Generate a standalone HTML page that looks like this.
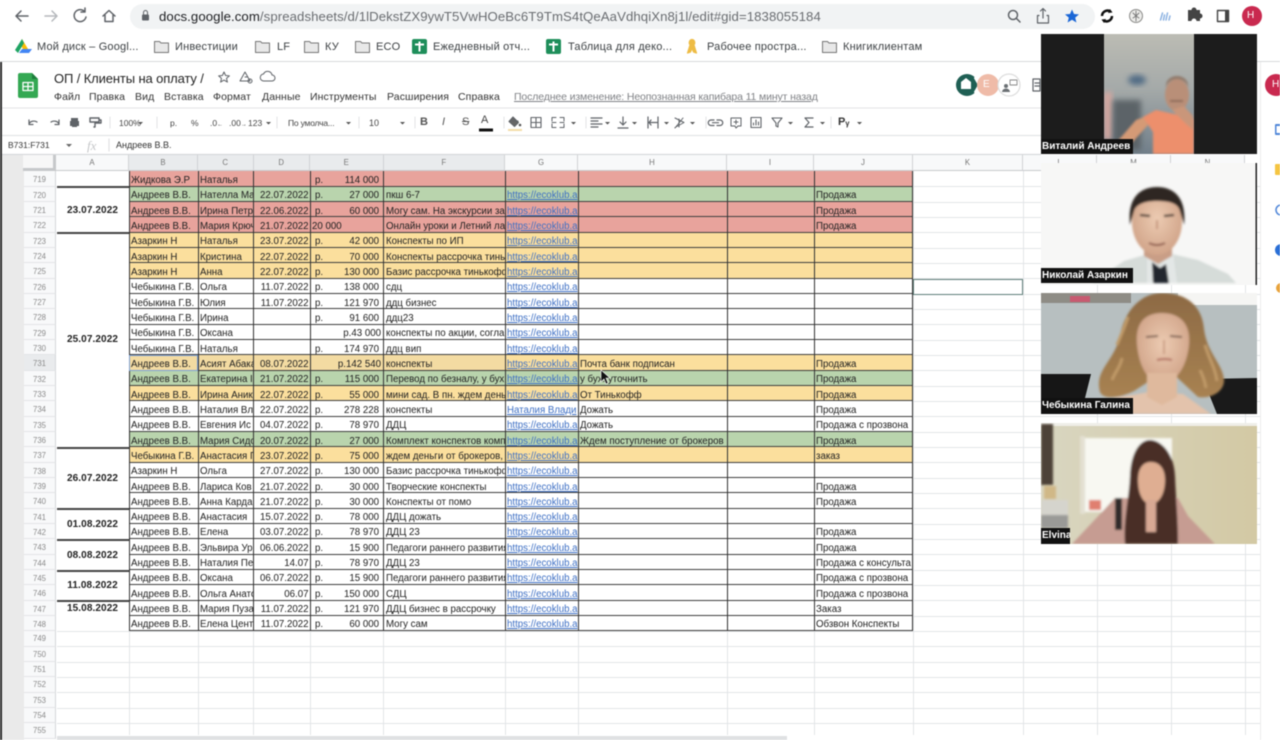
<!DOCTYPE html>
<html lang="ru"><head><meta charset="utf-8"><title>ОП / Клиенты на оплату</title>
<style>
*{box-sizing:border-box}
html,body{margin:0;padding:0;width:1280px;height:740px;overflow:hidden;background:#fff}
#p{position:relative;width:1280px;height:740px;overflow:hidden;font-family:"Liberation Sans",sans-serif;color:#222;filter:blur(.4px)}
.a{position:absolute;white-space:nowrap}
.b{position:absolute;font-size:11px;color:#3c4043;top:41px;letter-spacing:.18px;white-space:nowrap}
.m{position:absolute;font-size:10.5px;color:#333;top:91px;letter-spacing:.1px;white-space:nowrap}
.t{position:absolute;font-size:8.5px;color:#444;top:118px;white-space:nowrap}
svg{position:absolute;overflow:hidden}
.r{position:absolute;left:129px;width:784px;height:15.33px;border-bottom:1px solid #3f3f3f;font-size:9.7px;color:#222}
.r i{position:absolute;top:2.5px;line-height:13px;font-style:normal;white-space:nowrap;overflow:hidden;height:12.8px}
.r i:nth-child(1){left:2px;width:67px}
.r i:nth-child(2){left:71px;width:54px}
.r i:nth-child(3){left:125px;width:54.5px;text-align:right}
.r i:nth-child(4){left:186px;width:20px}
.r i:nth-child(5){left:185px;width:65px;text-align:right}
.r i:nth-child(6){left:257px;width:119px}
.r i:nth-child(7){left:378px;width:71px;color:#3d6fc4;text-decoration:underline}
.r i:nth-child(8){left:451px;width:148px}
.r i:nth-child(9){left:687px;width:97px}
.y{background:#fbdf9d}.g{background:#b9d4ad}.d{background:#e8a39c}
.h{position:absolute;left:57px;width:1203px;height:1px;background:#e3e5e7}
.v{position:absolute;top:171px;height:564px;width:1px;background:#e3e5e7}
.k{position:absolute;top:171.4px;height:460px;width:1px;background:#333}
.n{position:absolute;left:24px;width:32px;height:15.33px;background:#f8f9fa;border-bottom:1px solid #e3e5e7;border-right:1px solid #d5d7da;font-size:7.8px;color:#8a8a8a;text-align:center;line-height:18px}
.e{line-height:15.5px}
.c{position:absolute;top:155px;height:16px;background:#f8f9fa;border-right:1px solid #d0d2d5;border-bottom:1px solid #c8cacd;font-size:7.8px;color:#777;text-align:center;line-height:15px}
.s{background:#e9ebed}
.dt{position:absolute;left:57px;width:71px;text-align:center;font-size:10px;font-weight:700;color:#222;letter-spacing:.1px}
.sp{position:absolute;left:57px;width:72px;height:2px;background:#444}
.l{position:absolute;left:1041px;background:#111;color:#fff;font-size:10px;font-weight:700;letter-spacing:0;height:15px;line-height:15px;padding-left:1px;white-space:nowrap;overflow:hidden}
</style></head><body><div id="p">

<!-- Browser chrome -->
<svg style="left:0;top:0" width="1280" height="62" viewBox="0 0 1280 62" fill="none" stroke="#5f6368" stroke-width="1.5" stroke-linecap="round" stroke-linejoin="round">
<rect x="130" y="4" width="965" height="25" rx="12.5" fill="#f1f3f4" stroke="none"/>
<path d="M28 16H16M21 11l-5 5 5 5"/>
<path d="M45 16h12M52 11l5 5-5 5" stroke="#b5b8bc"/>
<path d="M85 12a6 6 0 1 0 1 5M85 8v4h-4"/>
<path d="M103 16l6-5.5 6 5.5M105 15v6.5h8V15"/>
<rect x="142" y="14.5" width="7" height="6" rx="1" fill="#5f6368" stroke="none"/>
<path d="M143.500 14.500v-2a2 2 0 0 1 4 0v2" stroke-width="1"/>
<circle cx="1013" cy="15" r="4.500"/><path d="M1016.500 18.500l3.500 3.500"/>
<path d="M1039 15.500h-1.500v7.500h11v-7.500h-1.500M1043 18V9M1040.500 11l2.500-2.500 2.500 2.500" stroke-width="1.200"/>
<path d="M1072 9.500l2 4.500 5 .4-3.800 3.200 1.200 4.900-4.400-2.700-4.400 2.700 1.200-4.900-3.800-3.200 5-.4z" fill="#1a66d6" stroke="none"/>
<path d="M1102 16a5.500 5.500 0 0 1 8.500-4.500M1112 16a5.500 5.500 0 0 1-8.500 4.500" stroke="#111" stroke-width="2.500" stroke-linecap="butt"/>
<path d="M1110 9l2.500 3.500-4.500.5zM1104 23l-2.500-3.500 4.500-.5z" fill="#111" stroke="none"/>
<circle cx="1136" cy="16" r="6.500" fill="#ececea" stroke="#8a8a88" stroke-width="1"/><path d="M1136 11v10M1133 13l3 3 3-3M1133 18l3-2 3 2" stroke="#777" stroke-width=".9"/>
<path d="M1160.500 20l2-7M1163.500 20l1-5M1166 20l1.500-7M1169 20l1-4" stroke="#8db3e2" stroke-width="1.500"/>
<path d="M1188 12h3.500a2.500 2.500 0 0 1 5 0h3.500v3.500a2.500 2.500 0 0 1 0 5V23h-3.500a2.500 2.500 0 0 0-5 0H1188z" fill="#444" stroke="none" transform="translate(0 -2)"/>
<rect x="1217.500" y="10.500" width="11" height="11" stroke="#444" stroke-width="1.400"/><rect x="1225" y="10" width="4" height="12" fill="#444" stroke="none"/>
<circle cx="1252" cy="16" r="10" fill="#c9294f" stroke="none"/>
<!-- Bookmarks -->
<path d="M22 39l6 10h-5l-3-5z" fill="#fbbc04" stroke="none"/><path d="M22 39l-7 11 3 3 6-10z" fill="#1fa463" stroke="none"/><path d="M19 53h10l3-4H22z" fill="#4285f4" stroke="none"/>
<g stroke="#777" stroke-width="1"><path d="M154.500 41.500h5l1.500 1.500h7.500v9.500h-14z" fill="#e8e8e8"/><path d="M255.500 41.500h5l1.500 1.500h7.500v9.500h-14z" fill="#e8e8e8"/><path d="M304.500 41.500h5l1.500 1.500h7.500v9.500h-14z" fill="#e8e8e8"/><path d="M355.500 41.500h5l1.500 1.500h7.500v9.500h-14z" fill="#e8e8e8"/><path d="M822.500 41.500h5l1.500 1.500h7.500v9.500h-14z" fill="#e8e8e8"/></g>
<rect x="412" y="39" width="15" height="15" rx="2" fill="#1e8e5a" stroke="none"/><path d="M415 44.500h9M419.500 41.500v10" stroke="#fff" stroke-width="2" stroke-linecap="butt"/>
<rect x="546" y="39" width="15" height="15" rx="2" fill="#1e8e5a" stroke="none"/><path d="M549 44.500h9M553.500 41.500v10" stroke="#fff" stroke-width="2" stroke-linecap="butt"/>
<path d="M692 39.500a2.800 3.200 0 0 1 0 6.400a2.800 3.200 0 0 1 0-6.400zM690 45l-2.500 8 3-1 2-5M694 45l2.500 8-3-1-2-5" fill="#eebc45" stroke="#eebc45" stroke-width="1.200"/>
</svg>
<div class="a" style="left:159px;top:8.500px;font-size:13.200px;color:#6a6d71;letter-spacing:.08px"><span style="color:#202124">docs.google.com</span>/spreadsheets/d/1lDekstZX9ywT5VwHOeBc6T9TmS4tQeAaVdhqiXn8j1l/edit#gid=1838055184</div>
<div class="a" style="left:1247px;top:10px;font-size:10px;color:#fff">Н</div>
<div class="b" style="left:37px">Мой диск – Googl...</div><div class="b" style="left:175px">Инвестиции</div><div class="b" style="left:277px">LF</div><div class="b" style="left:325px">КУ</div><div class="b" style="left:376px">ECO</div><div class="b" style="left:433px">Ежедневный отч...</div><div class="b" style="left:568px">Таблица для деко...</div><div class="b" style="left:707px">Рабочее простра...</div><div class="b" style="left:843px">Книгиклиентам</div>
<div class="a" style="left:0;top:61px;width:1280px;height:1px;background:#d8dadc"></div>

<!-- Docs header -->
<svg style="left:0;top:62px" width="1041" height="94" viewBox="0 62 1041 94" fill="none" stroke="#5f6368" stroke-width="1.200" stroke-linecap="round" stroke-linejoin="round">
<path d="M20 73h12l6 6v17a2 2 0 0 1-2 2H20a2 2 0 0 1-2-2V75a2 2 0 0 1 2-2z" fill="#34a853" stroke="none"/><path d="M32 73l6 6h-6z" fill="#1e7e3c" stroke="none"/><path d="M23 82.500h10v8H23zM23 86.500h10M28 82.500v8" stroke="#fff" stroke-width="1.300"/>
<path d="M224 72l1.600 3.500 3.800.4-2.900 2.500.9 3.700-3.400-2-3.400 2 .9-3.700-2.900-2.500 3.800-.4z" stroke-width="1"/>
<path d="M245 72l5 9h-10zM245 77h2" stroke-width="1"/><circle cx="250" cy="81" r="2" stroke-width="1"/>
<path d="M264 81h8a3 3 0 0 0 0-6 4.500 4.500 0 0 0-8.500-1 3.500 3.500 0 0 0 .5 7z" stroke-width="1"/>
<circle cx="967" cy="85" r="11" fill="#1f5f54" stroke="none"/><path d="M961 82l5-4 5 4v7h-10z" fill="#fff" stroke="none"/><path d="M975 78l4 7-4 7" stroke="#fff" stroke-width="2"/>
<circle cx="988" cy="85" r="11" fill="#efbba8" stroke="none"/>
<circle cx="1009" cy="85" r="11" fill="#fff" stroke="#ddd"/><circle cx="1006" cy="86" r="2" fill="#6b7074" stroke="none"/><path d="M1002 92a4 3.500 0 0 1 8 0z" fill="#6b7074" stroke="none"/><path d="M1010 80h7v5h-7z" stroke="#888" stroke-width=".9"/>
<path d="M1033 79h7v12h-7zM1035 83h5M1035 86h5" stroke="#5f6368"/>
<line x1="0" y1="108" x2="1041" y2="108" stroke="#e5e6e8"/>
<line x1="0" y1="135.500" x2="1041" y2="135.500" stroke="#e3e5e7"/>
<line x1="0" y1="154.500" x2="1041" y2="154.500" stroke="#d5d7da"/>
<!-- toolbar -->
<path d="M29 124a5 4 0 0 1 8-2M29 120v4.500h4"/><path d="M59 124a5 4 0 0 0-8-2M59 120v4.500h-4"/>
<path d="M71 118h7v3h-7zM70 121h9v5h-9zM72 124h5v3h-5z" fill="#5f6368" stroke="none"/><path d="M90 118h9v4h-9zM100 120h1v3h-6v4h-1" stroke-width="1.400"/>
<path d="M110 117v11M157 117v11M277 117v11M359 117v11M415 117v11M504 117v11M586 117v11M706 117v11M831 117v11" stroke="#e2e3e5" stroke-width="1"/>
<path d="M138 122h5l-2.500 2.500zM266 122h5l-2.500 2.500zM346 122h5l-2.500 2.500zM400 122h5l-2.500 2.500zM605 122h5l-2.500 2.500zM632 122h5l-2.500 2.500zM664 122h5l-2.500 2.500zM690 122h5l-2.500 2.500zM788 122h5l-2.500 2.500zM820 122h5l-2.500 2.500zM857 122h5l-2.500 2.500zM571 122h5l-2.500 2.500z" fill="#555" stroke="none"/>
<path d="M479 130h14" stroke="#111" stroke-width="3" stroke-linecap="butt"/>
<path d="M513 117l5.500 5.500-4 4-5.500-5zM509.500 121h8.500" stroke-width="1.100" fill="#666"/><circle cx="520" cy="125" r="1.300" fill="#555" stroke="none"/><path d="M508 130h14" stroke="#f3dca8" stroke-width="2" stroke-linecap="butt"/>
<path d="M531 117.500h10v10h-10zM531 122.500h10M536 117.500v10" stroke-width="1.100"/>
<path d="M552 121v-3.500h4M560 117.500h4v3.500M552 124v3.500h4M560 127.500h4V124M552 122.500h4M560 122.500h4" stroke-width="1"/>
<path d="M591 118h11M591 121h7M591 124h11M591 127h7"/><path d="M618 128h10M623 117v8M620 122l3 3 3-3"/><path d="M648 117v11M658 117v11M649 122.500h8M651 120l-2 2.500 2 2.500"/><path d="M675 118l9 4.500-9 5M679 119v8M683 118l-8 10" stroke-width="1"/>
<path d="M714 120h-3a2.500 2.500 0 0 0 0 5.500h3M717 120h3a2.500 2.500 0 0 1 0 5.500h-3M712.500 122.700h6"/>
<path d="M731 118h10v8h-3l-2 2-1-2h-4zM736 120v4M734 122h4" stroke-width="1"/><path d="M751 117.500h10v10h-10zM753.500 125v-2M756 125v-5M758.500 125v-3" stroke-width="1.100"/>
<path d="M772 118h10l-4 5v4l-2-1v-3z" stroke-width="1.100"/>
<path d="M813 118h-8l4 4.500-4 4.500h8"/>
<path d="M66 144l3 3 3-3h-6z" fill="#666" stroke="none"/><path d="M109 139v12" stroke="#e0e1e3"/>
</svg>
<div class="a" style="left:54px;top:70.500px;font-size:13px;color:#222;letter-spacing:-.12px">ОП / Клиенты на оплату /</div>
<div class="m" style="left:54px">Файл</div><div class="m" style="left:89px">Правка</div><div class="m" style="left:135px">Вид</div><div class="m" style="left:164px">Вставка</div><div class="m" style="left:213px">Формат</div><div class="m" style="left:262px">Данные</div><div class="m" style="left:310px">Инструменты</div><div class="m" style="left:387px">Расширения</div><div class="m" style="left:458px">Справка</div>
<div class="m" style="left:514px;color:#7f8185;text-decoration:underline;letter-spacing:-.13px">Последнее изменение: Неопознанная капибара 11 минут назад</div>
<div class="a" style="left:983px;top:79px;font-size:10px;color:#fff">E</div>
<div class="t" style="left:119px">100%</div><div class="t" style="left:170px">р.</div><div class="t" style="left:191px">%</div><div class="t" style="left:210px">.0<span style="font-size:6px">←</span></div><div class="t" style="left:229px">.00<span style="font-size:6px">→</span></div><div class="t" style="left:248px">123</div><div class="t" style="left:288px;letter-spacing:-.2px">По умолча...</div><div class="t" style="left:369px;font-size:9px">10</div>
<div class="a" style="left:420px;top:116px;font:700 11px 'Liberation Sans';color:#555">B</div><div class="a" style="left:442px;top:116px;font:italic 11px 'Liberation Sans';color:#555">I</div><div class="a" style="left:462px;top:116px;font-size:11px;color:#555;text-decoration:line-through">S</div><div class="a" style="left:481px;top:114px;font-size:11px;color:#444">A</div>
<div class="a" style="left:838px;top:116px;font:700 11px 'Liberation Sans';color:#333">Pᵧ</div>
<div class="a" style="left:8px;top:140px;font-size:8.500px;color:#333">B731:F731</div>
<div class="a" style="left:87px;top:138px;font:italic 13px 'Liberation Serif';color:#c4c6c8">fx</div>
<div class="a" style="left:116px;top:140px;font-size:9px;color:#333">Андреев В.В.</div>

<!-- Grid base -->
<div class="a" style="left:0;top:155px;width:24px;height:585px;background:#eaeaea"></div>
<div class="a" style="left:0;top:62px;width:2px;height:678px;background:#2a2a2a"></div>
<div class="a" style="left:23px;top:155px;width:33px;height:16px;background:#f7f7f7;border-right:3px solid #c6c8ca;border-bottom:3px solid #c6c8ca"></div>
<div class="c" style="left:56px;width:73px">A</div><div class="c s" style="left:129px;width:69px">B</div><div class="c s" style="left:198px;width:55.500px">C</div><div class="c s" style="left:253.500px;width:56.500px">D</div><div class="c s" style="left:310px;width:73.500px">E</div><div class="c s" style="left:383.500px;width:121.500px">F</div><div class="c" style="left:505px;width:73px">G</div><div class="c" style="left:578px;width:149px">H</div><div class="c" style="left:727px;width:87px">I</div><div class="c" style="left:814px;width:99px">J</div><div class="c" style="left:913px;width:110px">K</div><div class="c" style="left:1023px;width:74px">L</div><div class="c" style="left:1097px;width:74px">M</div><div class="c" style="left:1171px;width:74px">N</div>

<div class="v" style="left:129px"></div><div class="v" style="left:198px"></div><div class="v" style="left:253px"></div><div class="v" style="left:310px"></div><div class="v" style="left:383px"></div><div class="v" style="left:505px"></div><div class="v" style="left:578px"></div><div class="v" style="left:727px"></div><div class="v" style="left:814px"></div><div class="v" style="left:913px"></div><div class="v" style="left:1023px"></div><div class="v" style="left:1097px"></div><div class="v" style="left:1171px"></div><div class="v" style="left:1245px"></div>
<div class="h" style="top:186px"></div><div class="h" style="top:202px"></div><div class="h" style="top:217px"></div><div class="h" style="top:232px"></div><div class="h" style="top:248px"></div><div class="h" style="top:263px"></div><div class="h" style="top:278px"></div><div class="h" style="top:294px"></div><div class="h" style="top:309px"></div><div class="h" style="top:324px"></div><div class="h" style="top:340px"></div><div class="h" style="top:355px"></div><div class="h" style="top:370px"></div><div class="h" style="top:386px"></div><div class="h" style="top:401px"></div><div class="h" style="top:416px"></div><div class="h" style="top:432px"></div><div class="h" style="top:447px"></div><div class="h" style="top:462px"></div><div class="h" style="top:478px"></div><div class="h" style="top:493px"></div><div class="h" style="top:508px"></div><div class="h" style="top:524px"></div><div class="h" style="top:539px"></div><div class="h" style="top:554px"></div><div class="h" style="top:570px"></div><div class="h" style="top:585px"></div><div class="h" style="top:600px"></div><div class="h" style="top:616px"></div><div class="h" style="top:631px"></div><div class="h" style="top:646px"></div><div class="h" style="top:662px"></div><div class="h" style="top:677px"></div><div class="h" style="top:692px"></div><div class="h" style="top:708px"></div><div class="h" style="top:723px"></div>

<!-- Row numbers -->
<div class="n" style="top:171.400px">719</div><div class="n" style="top:186.730px">720</div><div class="n" style="top:202.060px">721</div><div class="n" style="top:217.390px">722</div><div class="n" style="top:232.720px">723</div><div class="n" style="top:248.050px">724</div><div class="n" style="top:263.380px">725</div><div class="n" style="top:278.710px">726</div><div class="n" style="top:294.040px">727</div><div class="n" style="top:309.370px">728</div><div class="n" style="top:324.700px">729</div><div class="n" style="top:340.030px">730</div><div class="n s" style="top:355.360px">731</div><div class="n" style="top:370.690px">732</div><div class="n" style="top:386.020px">733</div><div class="n" style="top:401.350px">734</div><div class="n" style="top:416.680px">735</div><div class="n" style="top:432.010px">736</div><div class="n" style="top:447.340px">737</div><div class="n" style="top:462.670px">738</div><div class="n" style="top:478px">739</div><div class="n" style="top:493.330px">740</div><div class="n" style="top:508.660px">741</div><div class="n" style="top:523.990px">742</div><div class="n" style="top:539.320px">743</div><div class="n" style="top:554.650px">744</div><div class="n" style="top:569.980px">745</div><div class="n" style="top:585.310px">746</div><div class="n" style="top:600.640px">747</div><div class="n" style="top:615.970px">748</div><div class="n e" style="top:631.300px">749</div><div class="n e" style="top:646.630px">750</div><div class="n e" style="top:661.960px">751</div><div class="n e" style="top:677.290px">752</div><div class="n e" style="top:692.620px">753</div><div class="n e" style="top:707.950px">754</div><div class="n e" style="top:723.280px">755</div>

<!-- Data -->
<div class="a" style="left:129px;top:171px;width:784px;height:1px;background:#555"></div>
<div class="r d" style="top:171.400px"><i>Жидкова Э.Р</i><i>Наталья</i><i></i><i>р.</i><i>114 000</i></div>
<div class="r g" style="top:186.730px"><i>Андреев В.В.</i><i>Нателла Ма</i><i>22.07.2022</i><i>р.</i><i>27 000</i><i>пкш 6-7</i><i>https://ecoklub.a</i><i></i><i>Продажа</i></div>
<div class="r d" style="top:202.060px"><i>Андреев В.В.</i><i>Ирина Петр</i><i>22.06.2022</i><i>р.</i><i>60 000</i><i>Могу сам. На экскурсии за</i><i>https://ecoklub.a</i><i></i><i>Продажа</i></div>
<div class="r d" style="top:217.390px"><i>Андреев В.В.</i><i>Мария Крюч</i><i>21.07.2022</i><i style="left:183px;width:50px">20 000</i><i></i><i>Онлайн уроки и Летний ла</i><i>https://ecoklub.a</i><i></i><i>Продажа</i></div>
<div class="r y" style="top:232.720px"><i>Азаркин Н</i><i>Наталья</i><i>23.07.2022</i><i>р.</i><i>42 000</i><i>Конспекты по ИП</i><i>https://ecoklub.a</i></div>
<div class="r y" style="top:248.050px"><i>Азаркин Н</i><i>Кристина</i><i>22.07.2022</i><i>р.</i><i>70 000</i><i>Конспекты рассрочка тинь</i><i>https://ecoklub.a</i></div>
<div class="r y" style="top:263.380px"><i>Азаркин Н</i><i>Анна</i><i>22.07.2022</i><i>р.</i><i>130 000</i><i>Базис рассрочка тинькофф</i><i>https://ecoklub.a</i></div>
<div class="r" style="top:278.710px;background:#fff"><i>Чебыкина Г.В.</i><i>Ольга</i><i>11.07.2022</i><i>р.</i><i>138 000</i><i>сдц</i><i>https://ecoklub.a</i></div>
<div class="r" style="top:294.040px;background:#fff"><i>Чебыкина Г.В.</i><i>Юлия</i><i>11.07.2022</i><i>р.</i><i>121 970</i><i>ддц бизнес</i><i>https://ecoklub.a</i></div>
<div class="r" style="top:309.370px;background:#fff"><i>Чебыкина Г.В.</i><i>Ирина</i><i></i><i>р.</i><i>91 600</i><i>ддц23</i><i>https://ecoklub.a</i></div>
<div class="r" style="top:324.700px;background:#fff"><i>Чебыкина Г.В.</i><i>Оксана</i><i></i><i></i><i style="width:67px">р.43 000</i><i>конспекты по акции, согла</i><i>https://ecoklub.a</i></div>
<div class="r" style="top:340.030px;background:#fff"><i>Чебыкина Г.В.</i><i>Наталья</i><i></i><i>р.</i><i>174 970</i><i>ддц вип</i><i>https://ecoklub.a</i></div>
<div class="r y" style="top:355.360px;background:linear-gradient(90deg,#f3dba2 376px,#fbdf9d 376px)"><i>Андреев В.В.</i><i>Асият Абака</i><i>08.07.2022</i><i></i><i style="width:67px">р.142 540</i><i>конспекты</i><i>https://ecoklub.a</i><i>Почта банк подписан</i><i>Продажа</i></div>
<div class="r g" style="top:370.690px"><i>Андреев В.В.</i><i>Екатерина I</i><i>21.07.2022</i><i>р.</i><i>115 000</i><i>Перевод по безналу, у бух</i><i>https://ecoklub.a</i><i>у бух. уточнить</i><i>Продажа</i></div>
<div class="r y" style="top:386.020px"><i>Андреев В.В.</i><i>Ирина Аник</i><i>22.07.2022</i><i>р.</i><i>55 000</i><i>мини сад. В пн. ждем день</i><i>https://ecoklub.a</i><i>От Тинькофф</i><i>Продажа</i></div>
<div class="r" style="top:401.350px;background:#fff"><i>Андреев В.В.</i><i>Наталия Вл</i><i>22.07.2022</i><i>р.</i><i>278 228</i><i>конспекты</i><i>Наталия Влади</i><i>Дожать</i><i>Продажа</i></div>
<div class="r" style="top:416.680px;background:#fff"><i>Андреев В.В.</i><i>Евгения Ис</i><i>04.07.2022</i><i>р.</i><i>78 970</i><i>ДДЦ</i><i>https://ecoklub.a</i><i>Дожать</i><i>Продажа с прозвона</i></div>
<div class="r g" style="top:432.010px"><i>Андреев В.В.</i><i>Мария Сидо</i><i>20.07.2022</i><i>р.</i><i>27 000</i><i>Комплект конспектов комп</i><i>https://ecoklub.a</i><i>Ждем поступление от брокеров</i><i>Продажа</i></div>
<div class="r y" style="top:447.340px"><i>Чебыкина Г.В.</i><i>Анастасия Г</i><i>23.07.2022</i><i>р.</i><i>75 000</i><i>ждем деньги от брокеров,</i><i>https://ecoklub.a</i><i></i><i>заказ</i></div>
<div class="r" style="top:462.670px;background:#fff"><i>Азаркин Н</i><i>Ольга</i><i>27.07.2022</i><i>р.</i><i>130 000</i><i>Базис рассрочка тинькофф</i><i>https://ecoklub.a</i></div>
<div class="r" style="top:478px;background:#fff"><i>Андреев В.В.</i><i>Лариса Ков</i><i>21.07.2022</i><i>р.</i><i>30 000</i><i>Творческие конспекты</i><i>https://ecoklub.a</i><i></i><i>Продажа</i></div>
<div class="r" style="top:493.330px;background:#fff"><i>Андреев В.В.</i><i>Анна Карда</i><i>21.07.2022</i><i>р.</i><i>30 000</i><i>Конспекты от помо</i><i>https://ecoklub.a</i><i></i><i>Продажа</i></div>
<div class="r" style="top:508.660px;background:#fff"><i>Андреев В.В.</i><i>Анастасия</i><i>15.07.2022</i><i>р.</i><i>78 000</i><i>ДДЦ дожать</i><i>https://ecoklub.a</i></div>
<div class="r" style="top:523.990px;background:#fff"><i>Андреев В.В.</i><i>Елена</i><i>03.07.2022</i><i>р.</i><i>78 970</i><i>ДДЦ 23</i><i>https://ecoklub.a</i><i></i><i>Продажа</i></div>
<div class="r" style="top:539.320px;background:#fff"><i>Андреев В.В.</i><i>Эльвира Ур</i><i>06.06.2022</i><i>р.</i><i>15 900</i><i>Педагоги раннего развития</i><i>https://ecoklub.a</i><i></i><i>Продажа</i></div>
<div class="r" style="top:554.650px;background:#fff"><i>Андреев В.В.</i><i>Наталия Пе</i><i>14.07</i><i>р.</i><i>78 970</i><i>ДДЦ 23</i><i>https://ecoklub.a</i><i></i><i>Продажа с консульта</i></div>
<div class="r" style="top:569.980px;background:#fff"><i>Андреев В.В.</i><i>Оксана</i><i>06.07.2022</i><i>р.</i><i>15 900</i><i>Педагоги раннего развития</i><i>https://ecoklub.a</i><i></i><i>Продажа с прозвона</i></div>
<div class="r" style="top:585.310px;background:#fff"><i>Андреев В.В.</i><i>Ольга Анато</i><i>06.07</i><i>р.</i><i>150 000</i><i>СДЦ</i><i>https://ecoklub.a</i><i></i><i>Продажа с прозвона</i></div>
<div class="r" style="top:600.640px;background:#fff"><i>Андреев В.В.</i><i>Мария Пуза</i><i>11.07.2022</i><i>р.</i><i>121 970</i><i>ДДЦ бизнес в рассрочку</i><i>https://ecoklub.a</i><i></i><i>Заказ</i></div>
<div class="r" style="top:615.970px;background:#fff"><i>Андреев В.В.</i><i>Елена Цент</i><i>11.07.2022</i><i>р.</i><i>60 000</i><i>Могу сам</i><i>https://ecoklub.a</i><i></i><i>Обзвон Конспекты</i></div>

<div class="k" style="left:129px"></div><div class="k" style="left:198px"></div><div class="k" style="left:253px"></div><div class="k" style="left:310px"></div><div class="k" style="left:383px"></div><div class="k" style="left:505px"></div><div class="k" style="left:578px"></div><div class="k" style="left:727px"></div><div class="k" style="left:814px"></div><div class="k" style="left:912px"></div>
<div class="a" style="left:129px;top:355px;width:69px;height:16px;border:1.500px solid #7ba0d6"></div>
<div class="a" style="left:913px;top:278.500px;width:110px;height:16px;border:1px solid #5f7f7a"></div>

<!-- Column A merged dates -->
<div class="a" style="left:57px;top:187px;width:72px;height:45px;background:#fff"></div>
<div class="a" style="left:57px;top:234px;width:72px;height:213px;background:#fff"></div><div class="a" style="left:57px;top:449px;width:72px;height:59px;background:#fff"></div><div class="a" style="left:57px;top:510px;width:72px;height:29px;background:#fff"></div><div class="a" style="left:57px;top:541px;width:72px;height:29px;background:#fff"></div><div class="a" style="left:57px;top:572px;width:72px;height:28px;background:#fff"></div><div class="a" style="left:57px;top:602px;width:72px;height:29px;background:#fff"></div><div class="a" style="left:57px;top:172px;width:72px;height:14px;background:#fff"></div>
<div class="sp" style="top:186px"></div><div class="sp" style="top:232px"></div><div class="sp" style="top:447px"></div><div class="sp" style="top:508px"></div><div class="sp" style="top:539px"></div><div class="sp" style="top:570px"></div><div class="sp" style="top:600px"></div>
<div class="dt" style="top:204.500px">23.07.2022</div><div class="dt" style="top:334px">25.07.2022</div><div class="dt" style="top:472.500px">26.07.2022</div><div class="dt" style="top:519px">01.08.2022</div><div class="dt" style="top:549.500px">08.08.2022</div><div class="dt" style="top:580px">11.08.2022</div><div class="dt" style="top:603px">15.08.2022</div>

<!-- Cursor -->
<svg style="left:598px;top:368px" width="14" height="18" viewBox="0 0 14 18"><path d="M3 2v12l3-3 2 5 2-1-2-5h4z" fill="#111" stroke="#fff" stroke-width=".6"/></svg>

<!-- Scrollbar / sidebar -->
<div class="a" style="left:57px;top:736px;width:730px;height:4px;background:#dfe1e3"></div>
<div class="a" style="left:1260px;top:62px;width:20px;height:678px;background:#fff;border-left:1px solid #eceded"></div>
<svg style="left:1260px;top:62px" width="20" height="678" viewBox="1260 62 20 678">
<circle cx="1276" cy="85" r="11" fill="#c9294f"/>
<rect x="1275" y="124" width="8" height="11" rx="1" fill="#4f86d8"/><rect x="1276.500" y="126" width="6" height="7" fill="#fff"/>
<rect x="1275" y="164" width="8" height="11" rx="1" fill="#f5c542"/>
<circle cx="1281" cy="210" r="5" fill="none" stroke="#4f86d8" stroke-width="1.500"/>
<circle cx="1281" cy="250" r="6" fill="#2a6fd6"/>
<circle cx="1281" cy="288" r="5" fill="#e8a33c"/>
</svg>
<div class="a" style="left:1272px;top:79px;font-size:10px;color:#fff">Н</div>

<!-- Video 1 -->
<svg style="left:1041px;top:34px" width="216" height="120" viewBox="1041 34 216 120">
<defs>
<linearGradient id="g1" x1="0" y1="0" x2="0" y2="1"><stop offset="0" stop-color="#bcbcb4"/><stop offset=".45" stop-color="#a5aaa9"/><stop offset="1" stop-color="#717f8a"/></linearGradient>
<radialGradient id="sk" cx=".5" cy=".45" r=".6"><stop offset="0" stop-color="#eccbb2"/><stop offset="1" stop-color="#cfa186"/></radialGradient>
<linearGradient id="hr" x1="0" y1="0" x2="0" y2="1"><stop offset="0" stop-color="#8d6a44"/><stop offset="1" stop-color="#a88252"/></linearGradient>
<filter id="f1" x="-10%" y="-10%" width="120%" height="120%"><feGaussianBlur stdDeviation="1"/></filter>
<filter id="f2" x="-30%" y="-30%" width="160%" height="160%"><feGaussianBlur stdDeviation="3"/></filter>
</defs>
<rect x="1041" y="34" width="216" height="120" fill="#1c1c1c"/>
<rect x="1104" y="34" width="90" height="120" fill="url(#g1)"/>
<clipPath id="c1"><rect x="1104" y="34" width="90" height="120"/></clipPath>
<g clip-path="url(#c1)">
<ellipse cx="1137" cy="80" rx="9" ry="5" fill="#4f6a84" filter="url(#f2)"/>
<rect x="1104" y="92" width="8" height="48" fill="#d9a8a0" filter="url(#f2)"/>
<rect x="1113" y="100" width="28" height="50" fill="#5c6468" filter="url(#f2)"/>
<g filter="url(#f1)">
<path d="M1116 143l20-23 8-3 4 8-18 20z" fill="#d49a76"/>
<path d="M1143 117l13-7 18 4 20 5v35h-41v-22z" fill="#ed8f6c"/>
<ellipse cx="1177" cy="95" rx="12" ry="16" fill="#b98f78"/>
<path d="M1165 92a12 13 0 0 1 24 0l-1-7a11 9 0 0 0-22 0z" fill="#907a6c"/>
<path d="M1170 101h13" stroke="#7c5c4c" stroke-width="1.500"/>
<path d="M1172 110l12-4 9 10v14l-8-7z" fill="#c9967a"/>
</g></g>
</svg>
<div class="l" style="top:139px;width:92px">Виталий Андреев</div>

<!-- Video 2 -->
<svg style="left:1041px;top:163px" width="216" height="122" viewBox="1041 163 216 122">
<rect x="1041" y="163" width="216" height="122" fill="#f7f7f6"/>
<g filter="url(#f1)">
<path d="M1092 283l32-22 24-7h24l26 6 30 14 8 9z" fill="#d6dcd9"/>
<path d="M1147 252l12 14 14-14 4 31h-30z" fill="#e3e7e6"/>
<path d="M1152 262l8 6 6-4 3 19h-16z" fill="#20262e"/>
<path d="M1144 240h28v16l-14 8-14-8z" fill="#c99e86"/>
<ellipse cx="1157" cy="222" rx="25" ry="33" fill="url(#sk)"/>
<path d="M1130 225c-3-28 11-38 27-38s30 10 27 38l-4-14c-2-8-11-10-23-10s-21 3-23 10z" fill="#2e2824"/>
<path d="M1140 215l10 1M1164 216l10-1" stroke="#4a3a32" stroke-width="2.200" fill="none"/>
<path d="M1157 220v9" stroke="#c6977e" stroke-width="2" fill="none"/>
<path d="M1149 243q8 4 16 0" stroke="#8e5a4c" stroke-width="2" fill="none"/>
</g>
<rect x="1255.500" y="163" width="1.500" height="122" fill="#222"/>
</svg>
<div class="l" style="top:268px;width:92px">Николай Азаркин</div>

<!-- Video 3 -->
<svg style="left:1041px;top:293px" width="216" height="121" viewBox="1041 293 216 121">
<rect x="1041" y="293" width="216" height="121" fill="#b7bfc0"/>
<rect x="1041" y="293" width="90" height="10" fill="#8e8c85"/><rect x="1178" y="293" width="79" height="12" fill="#f5f5f3"/>
<rect x="1070" y="296" width="20" height="6" fill="#c85a70"/>
<path d="M1041 374h50l-10 40h-40z" fill="#161616"/><path d="M1203 379l54-1v36h-40z" fill="#1a1a1a"/>
<g filter="url(#f1)">
<path d="M1095 414l20-16 34-6 34 2 28 20z" fill="#e3c3ac"/>
<path d="M1100 392c-6-22 14-30 20-56 4-24 20-43 42-43 26 0 40 14 42 36 3 24 18 34 20 50 1 13-14 20-26 18l-30-28-34 22c-12 6-30 10-34 1z" fill="url(#hr)"/>
<path d="M1117 345c5-12 9-22 11-28M1205 345c4 14 10 22 12 36M1112 380c4-10 8-12 10-22M1200 370c3 6 5 12 6 18" stroke="#c09a68" stroke-width="3" fill="none"/>
<path d="M1137 345c-2-20 6-32 25-32s29 12 27 32c-2 20-12 38-27 38s-23-18-25-38z" fill="url(#sk)"/>
<path d="M1147 373h30v24l-15 8-15-8z" fill="#dfb99d"/>
<path d="M1146 337l12-1M1170 336l12 1" stroke="#6f5546" stroke-width="1.800" fill="none"/>
<path d="M1164 340v14" stroke="#cc9f85" stroke-width="2" fill="none"/>
<path d="M1157 360q8-2 15 0" stroke="#b77768" stroke-width="2.200" fill="none"/>
</g>
</svg>
<div class="l" style="top:398px;width:92px;height:16px">Чебыкина Галина</div>

<!-- Video 4 -->
<svg style="left:1041px;top:423px" width="216" height="121" viewBox="1041 423 216 121">
<defs><linearGradient id="g4" x1="0" y1="0" x2="1" y2="0"><stop offset="0" stop-color="#d9d6c1"/><stop offset="1" stop-color="#d3c9a4"/></linearGradient></defs>
<rect x="1041" y="423" width="216" height="121" fill="url(#g4)"/>
<rect x="1041" y="423" width="216" height="3" fill="#efeee8"/>
<g filter="url(#f1)">
<rect x="1041" y="424" width="12" height="61" fill="#4d4239"/>
<rect x="1085" y="438" width="87" height="74" fill="#f8f8f2"/>
<rect x="1080" y="436" width="5" height="78" fill="#e3e0d2"/>
<rect x="1041" y="500" width="27" height="28" fill="#d5d4cd"/>
<rect x="1041" y="515" width="27" height="13" fill="#9a9a97"/>
<rect x="1044" y="486" width="12" height="13" fill="#d0b887"/>
<rect x="1089" y="500" width="12" height="10" fill="#d9604f" opacity=".8"/>
<path d="M1072 544l30-32 13-14h63l10 18 27 28z" fill="#c69c92"/>
<path d="M1125 544c-2-24 4-44 5-68 1-24 10-36 20-36s24 12 25 36c1 24 3 44 3 68z" fill="#4a2e26"/>
<path d="M1138 480c0-12 5-18 13-18s14 6 14 18c0 14-6 24-14 24s-13-10-13-24z" fill="#dfae92"/>
<path d="M1146 500h10v32h-10z" fill="#d8a994"/><path d="M1115 498h7v32h-7z" fill="#2f2b2b"/>
</g>
</svg>
<div class="l" style="top:528px;width:29px;height:16px">Elvina</div>

</div></body></html>
